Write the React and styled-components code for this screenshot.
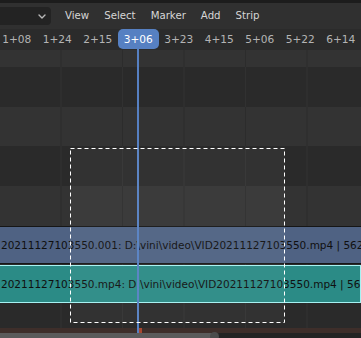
import React from 'react'
import styled, { createGlobalStyle } from 'styled-components'

const GlobalStyle = createGlobalStyle`
  html, body {
    margin: 0;
    padding: 0;
    background: #1d1d1d;
  }
  body {
    font-family: "DejaVu Sans", "Liberation Sans", sans-serif;
  }
`

// whole sequencer editor
const Editor = styled.div`
  position: relative;
  width: 361px;
  height: 338px;
  display: flex;
  flex-direction: column;
  overflow: hidden;
  background: #2a2a2a;
`

const Header = styled.div`
  height: 26px;
  border-top: 3px solid #1c1c1c;
  background: #303030;
  display: flex;
  align-items: center;
`

const Dropdown = styled.div`
  width: 51px;
  height: 18px;
  background: #232323;
  border-radius: 0 4px 4px 0;
  display: flex;
  align-items: center;
  justify-content: flex-end;
  box-sizing: border-box;
  svg {
    margin-right: 5px;
  }
`

const Menu = styled.div`
  display: flex;
  margin-left: 6.5px;
`

const MenuItem = styled.span`
  padding: 0 7.5px;
  font-size: 10.2px;
  color: #d6d6d6;
  line-height: 18px;
`

const Ruler = styled.div`
  height: 21px;
  background: #2b2b2b;
  display: flex;
  align-items: flex-start;
  margin-left: -3.5px;
`

const Frame = styled.div`
  flex: 0 0 40.5px;
  height: 20px;
  line-height: 20px;
  text-align: center;
  font-size: 10.6px;
  color: ${p => (p.$current ? '#ffffff' : '#b4b4b4')};
  background: ${p => (p.$current ? '#5680c2' : 'transparent')};
  border-radius: 5px;
  position: relative;
  z-index: 2;
`

const Channels = styled.div`
  display: flex;
  flex-direction: column;
`

const gridLines = color =>
  `linear-gradient(to right, transparent 60.5px, ${color} 60.5px, ${color} 61.5px, transparent 61.5px)`

const Row = styled.div`
  height: ${p => p.$h}px;
  background-color: ${p => (p.$light ? '#333333' : '#2a2a2a')};
  background-image: ${p => gridLines(p.$light ? 'rgba(0,0,0,0.14)' : 'rgba(255,255,255,0.035)')};
  background-size: 61.5px 100%;
  background-repeat: repeat-x;
  display: flex;
  flex-direction: column;
`

const Strip = styled.div`
  height: ${p => p.$h}px;
  box-sizing: border-box;
  background: ${p => p.$color};
  border-top: 1px solid ${p => p.$border};
  border-bottom: 1px solid ${p => p.$border};
  border-right: ${p => (p.$active ? `1px solid ${p.$border}` : 'none')};
  font-size: 10.5px;
  line-height: ${p => p.$h - 2}px;
  color: #101010;
  white-space: nowrap;
  overflow: hidden;
  padding-left: ${p => p.$indent}px;
`

const RangeBand = styled.div`
  height: 5px;
  background: #3e2e2a;
`

const Scrollbar = styled.div`
  height: 5px;
  background: #242424;
  display: flex;
`

const Thumb = styled.div`
  position: relative;
  width: 214px;
  background: #5b5b5b;
  &::after {
    content: '';
    position: absolute;
    right: -5px;
    top: -1px;
    width: 9px;
    height: 9px;
    border-radius: 50%;
    background: #4c4c4c;
  }
`

// overlays
const Playhead = styled.div`
  position: absolute;
  left: 137px;
  top: 48px;
  bottom: 5px;
  width: 2px;
  background: #5680c2;
  z-index: 1;
`

const PlayheadMark = styled.div`
  position: absolute;
  left: 139px;
  top: 328px;
  width: 3px;
  height: 5px;
  background: #a8472f;
`

const BoxSelect = styled.div`
  position: absolute;
  left: 70px;
  top: 148px;
  width: 215px;
  height: 175px;
  background: rgba(255, 255, 255, 0.04);
  z-index: 3;
  svg {
    display: block;
  }
`

const frames = ['1+08', '1+24', '2+15', '3+06', '3+23', '4+15', '5+06', '5+22', '6+14']
const menus = ['View', 'Select', 'Marker', 'Add', 'Strip']

const Chevron = () => (
  <svg width="8" height="5" viewBox="0 0 8 5">
    <path d="M1 1 L4 4 L7 1" fill="none" stroke="#b8b8b8" strokeWidth="1.4" strokeLinecap="round" strokeLinejoin="round" />
  </svg>
)

const App = () => (
  <>
    <GlobalStyle />
    <Editor>
      <Header>
        <Dropdown>
          <Chevron />
        </Dropdown>
        <Menu>
          {menus.map(m => (
            <MenuItem key={m}>{m}</MenuItem>
          ))}
        </Menu>
      </Header>
      <Ruler>
        {frames.map(f => (
          <Frame key={f} $current={f === '3+06'}>{f}</Frame>
        ))}
      </Ruler>
      <Channels>
        <Row $h={17} $light />
        <Row $h={40} />
        <Row $h={39} $light />
        <Row $h={40} />
        <Row $h={40} $light />
        <Row $h={39}>
          <Strip $h={38} $color="#4f6283" $border="#161616" $indent={1}>
            20211127103550.001: D:\vini\video\VID20211127103550.mp4 | 562
          </Strip>
        </Row>
        <Row $h={38}>
          <Strip $h={38} $color="#2b8b86" $border="#a6f2f2" $indent={1} $active>
            20211127103550.mp4: D:\vini\video\VID20211127103550.mp4 | 562
          </Strip>
        </Row>
        <Row $h={25} />
        <RangeBand />
        <Scrollbar>
          <Thumb />
        </Scrollbar>
      </Channels>
      <Playhead />
      <PlayheadMark />
      <BoxSelect>
        <svg width="215" height="175">
          <rect x="0.5" y="0.5" width="214" height="174" fill="none" stroke="#ffffff" strokeWidth="1" strokeDasharray="4 3" />
        </svg>
      </BoxSelect>
    </Editor>
  </>
)

export default App
